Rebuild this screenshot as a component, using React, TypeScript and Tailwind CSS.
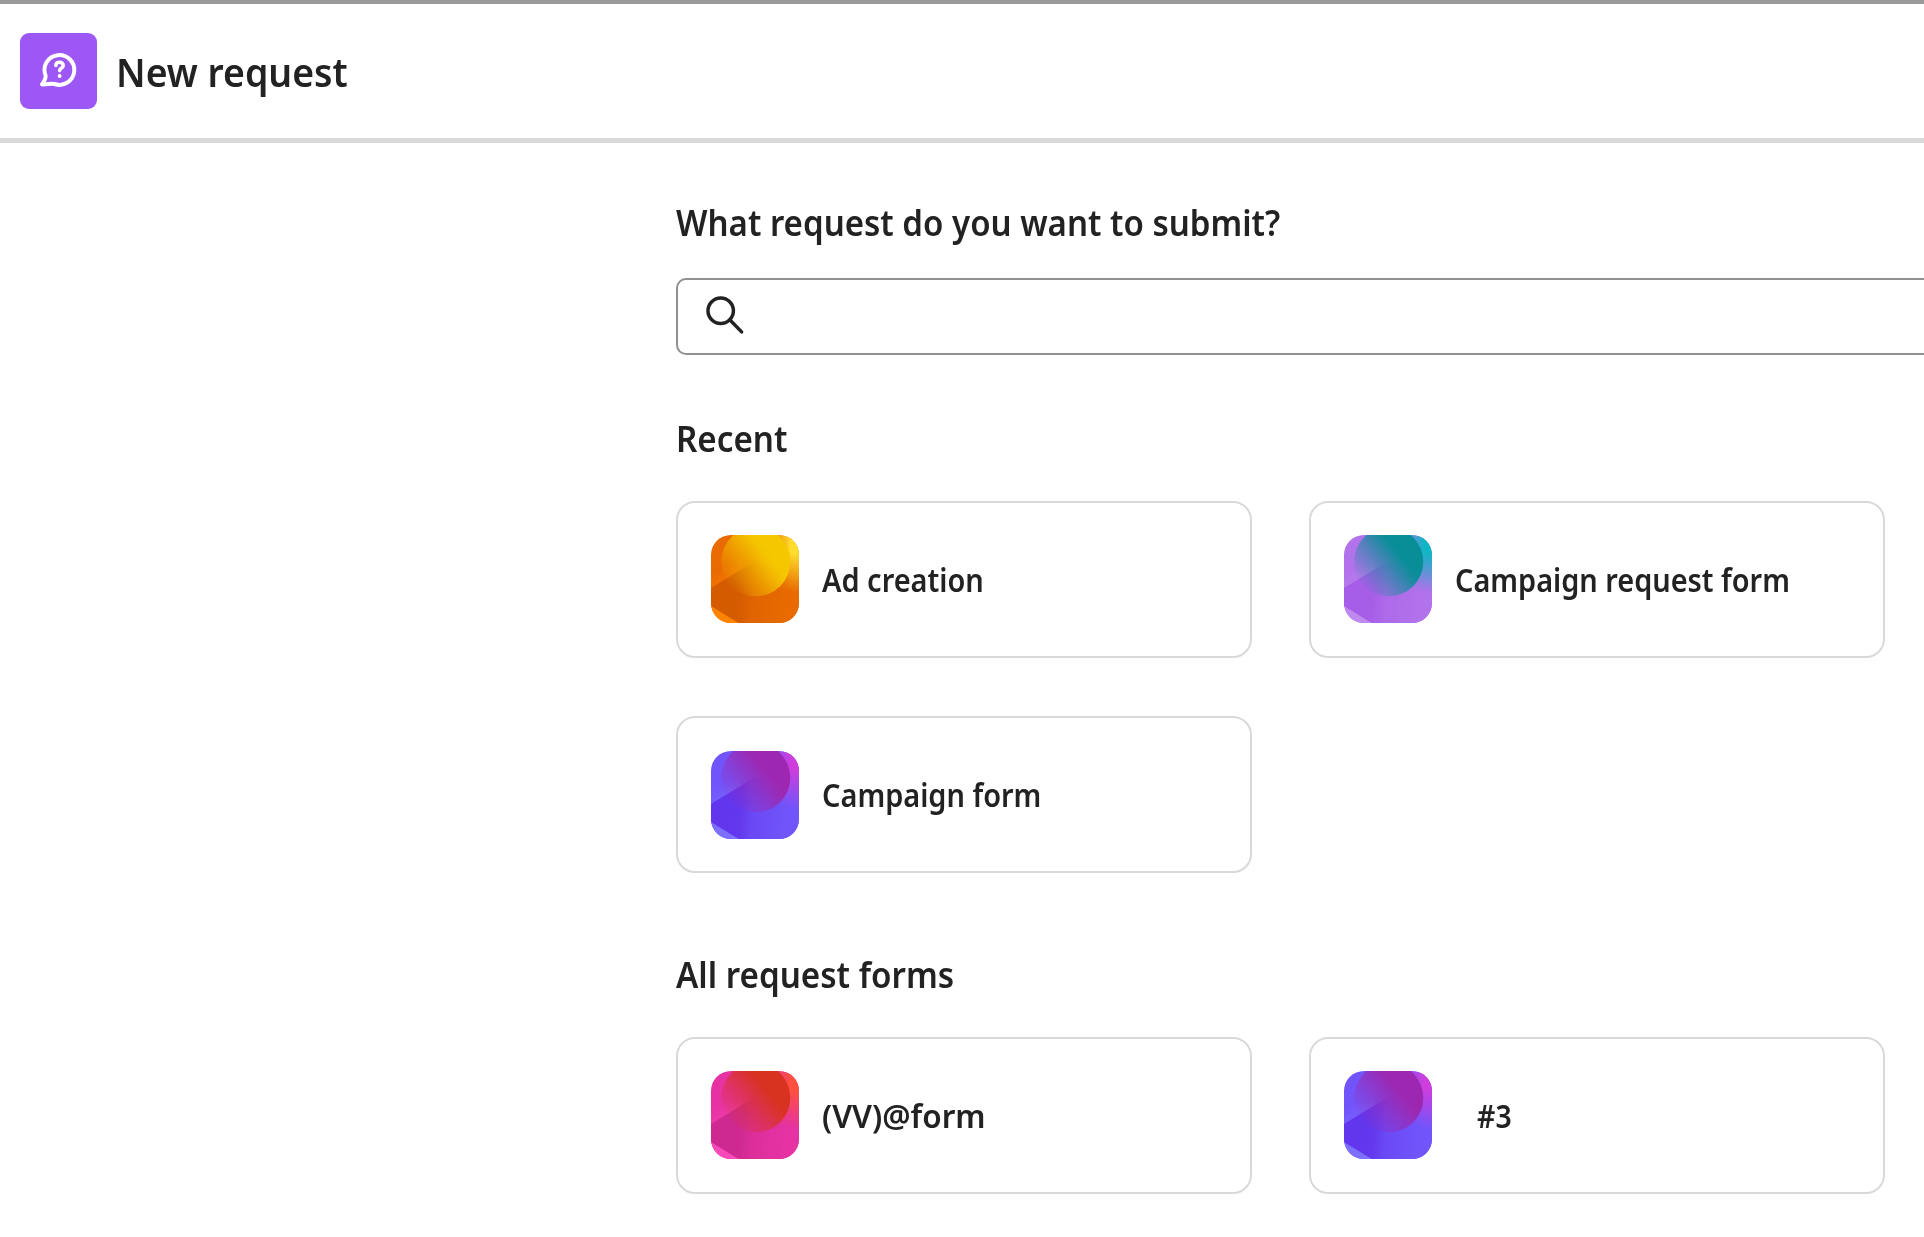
import { useId } from "react";

type Palette = {
  base: string;
  corner: string;
  circle: string;
  dark: string;
  light: string;
};

const palettes: Record<string, Palette> = {
  orange: { base: "#e86a00", corner: "#ffde2c", circle: "#f5c700", dark: "#d45b00", light: "#ff8400" },
  teal: { base: "#b272eb", corner: "#0fb5c3", circle: "#078e97", dark: "#a65de7", light: "#bf8af0" },
  indigo: { base: "#7155fa", corner: "#cf3edc", circle: "#9d27b0", dark: "#6236ed", light: "#7e70ff" },
  pink: { base: "#e632a3", corner: "#ff513d", circle: "#d83220", dark: "#ce2990", light: "#f64ab9" },
};

function FormThumb({ palette }: { palette: Palette }) {
  const id = useId().replace(/[^a-zA-Z0-9]/g, "");
  const { base, corner, circle, dark, light } = palette;
  return (
    <svg viewBox="0 0 88 88" className="size-[88px] shrink-0 rounded-[20px]">
      <defs>
        <linearGradient id={`${id}c`} gradientUnits="userSpaceOnUse" x1="86" y1="18" x2="80" y2="57">
          <stop offset="0" stopColor={corner} />
          <stop offset="1" stopColor={corner} stopOpacity="0" />
        </linearGradient>
        <linearGradient id={`${id}m`} gradientUnits="userSpaceOnUse" x1="44" y1="0" x2="80" y2="0">
          <stop offset="0" stopColor="#fff" stopOpacity="0" />
          <stop offset="0.6" stopColor="#fff" stopOpacity="0.35" />
          <stop offset="1" stopColor="#fff" />
        </linearGradient>
        <mask id={`${id}k`}>
          <rect x="44" width="44" height="88" fill={`url(#${id}m)`} />
        </mask>
        <linearGradient id={`${id}l`} gradientUnits="userSpaceOnUse" x1="10" y1="46" x2="5" y2="36">
          <stop offset="0" stopColor={light} stopOpacity="0.3" />
          <stop offset="1" stopColor={light} stopOpacity="0" />
        </linearGradient>
        <linearGradient id={`${id}d`} gradientUnits="userSpaceOnUse" x1="24" y1="60" x2="76" y2="64">
          <stop offset="0" stopColor={dark} />
          <stop offset="0.12" stopColor={dark} stopOpacity="0.9" />
          <stop offset="0.35" stopColor={dark} stopOpacity="0.4" />
          <stop offset="1" stopColor={dark} stopOpacity="0" />
        </linearGradient>
        <linearGradient id={`${id}o`} gradientUnits="userSpaceOnUse" x1="20" y1="49" x2="59" y2="17">
          <stop offset="0" stopColor={circle} stopOpacity="0.06" />
          <stop offset="0.5" stopColor={circle} stopOpacity="0.55" />
          <stop offset="0.9" stopColor={circle} stopOpacity="0.97" />
          <stop offset="1" stopColor={circle} />
        </linearGradient>
      </defs>
      <rect width="88" height="88" fill={base} />
      <path d="M0 0H30V60H0Z" fill={`url(#${id}l)`} />
      <path d="M0 71L28 88H0Z" fill={light} />
      <path d="M0 53L38.5 29.6Q45 25.6 51.5 29.6L88 52V88H28L0 71Z" fill={base} />
      <path d="M0 53L38.5 29.6Q45 25.6 51.5 29.6L88 52V88H28L0 71Z" fill={`url(#${id}d)`} />
      <rect width="88" height="60" fill={`url(#${id}c)`} mask={`url(#${id}k)`} />
      <circle cx="44.7" cy="26.7" r="34.6" fill={`url(#${id}o)`} />
    </svg>
  );
}

function RequestIcon() {
  return (
    <svg
      viewBox="0 0 77 76"
      className="h-[76px] w-[77px] shrink-0 rounded-[9px] bg-[#9d57f4]"
      fill="none"
      stroke="#fff"
      strokeLinecap="round"
      strokeLinejoin="round"
    >
      <path
        d="M25.5 42.3A14.9 14.9 0 1 1 34.5 51C31 50 27.5 51.6 22 51.4C24 48.2 26.4 45.5 25.5 42.3Z"
        strokeWidth="4"
      />
      <path d="M35.9 32.4C35.9 30.3 37.6 29.3 39.5 29.3C41.6 29.3 43.2 30.6 43.2 32.6C43.2 35.4 39.6 35.2 39.6 37.6" strokeWidth="3.6" />
      <circle cx="39.6" cy="43" r="2" fill="#fff" stroke="none" />
    </svg>
  );
}

function SearchIcon() {
  return (
    <svg viewBox="0 0 40 40" className="mb-[3px] size-10" fill="none" stroke="#222" strokeWidth="3.5" strokeLinecap="round">
      <circle cx="15.7" cy="15.8" r="12.7" />
      <path d="M25 25L36.6 36.9" />
    </svg>
  );
}

type Form = { name: string; palette: Palette; text: string; nudge?: string };

function FormCard({ name, palette, text, nudge = "pb-px" }: Form) {
  return (
    <button className="flex h-[157px] w-full items-center rounded-[19px] border-2 border-[#d9d9d9] pl-[33px] text-left">
      <span className={`block ${nudge}`}>
        <FormThumb palette={palette} />
      </span>
      <span className={`block origin-left text-[32px] leading-10 font-semibold whitespace-nowrap ${text}`}>{name}</span>
    </button>
  );
}

const recent: Form[] = [
  { name: "Ad creation", palette: palettes.orange, text: "ml-[23px] scale-x-[0.905]" },
  { name: "Campaign request form", palette: palettes.teal, text: "ml-[23px] scale-x-[0.903]" },
  { name: "Campaign form", palette: palettes.indigo, text: "ml-[23px] scale-x-[0.904]", nudge: "pb-0" },
];

const all: Form[] = [
  { name: "(VV)@form", palette: palettes.pink, text: "ml-[23px] scale-x-[0.985]" },
  { name: "#3", palette: palettes.indigo, text: "ml-[45px] scale-x-[0.89]" },
];

export default function App() {
  return (
    <div className="h-[1237px] overflow-hidden border-t-4 border-[#999] bg-white font-['Noto_Sans',sans-serif] text-[#222]">
      <header className="flex h-[139px] items-center border-b-[5px] border-[#d9d9d9] pl-5">
        <RequestIcon />
        <h1 className="mt-[2px] ml-[19px] origin-left scale-x-[0.935] text-[40px] leading-[48px] font-semibold whitespace-nowrap">
          New request
        </h1>
      </header>

      <main className="ml-[676px] w-[1300px]">
        <h2 className="mt-[55px] origin-left scale-x-[0.918] text-[36px] leading-[50px] font-semibold whitespace-nowrap">
          What request do you want to submit?
        </h2>
        <div className="mt-[30px] flex h-[77px] items-center rounded-[10px] border-2 border-[#909090] pl-[27px]">
          <SearchIcon />
        </div>

        <h2 className="mt-[59px] origin-left scale-x-[0.922] text-[36px] leading-[50px] font-semibold">Recent</h2>
        <div className="mt-[37px] grid grid-cols-[576px_576px] gap-x-[57px] gap-y-[58px]">
          {recent.map((form) => (
            <FormCard key={form.name} {...form} />
          ))}
        </div>

        <h2 className="mt-[77px] origin-left scale-x-[0.922] text-[36px] leading-[50px] font-semibold">All request forms</h2>
        <div className="mt-[37px] grid grid-cols-[576px_576px] gap-x-[57px]">
          {all.map((form) => (
            <FormCard key={form.name} {...form} />
          ))}
        </div>
      </main>
    </div>
  );
}
